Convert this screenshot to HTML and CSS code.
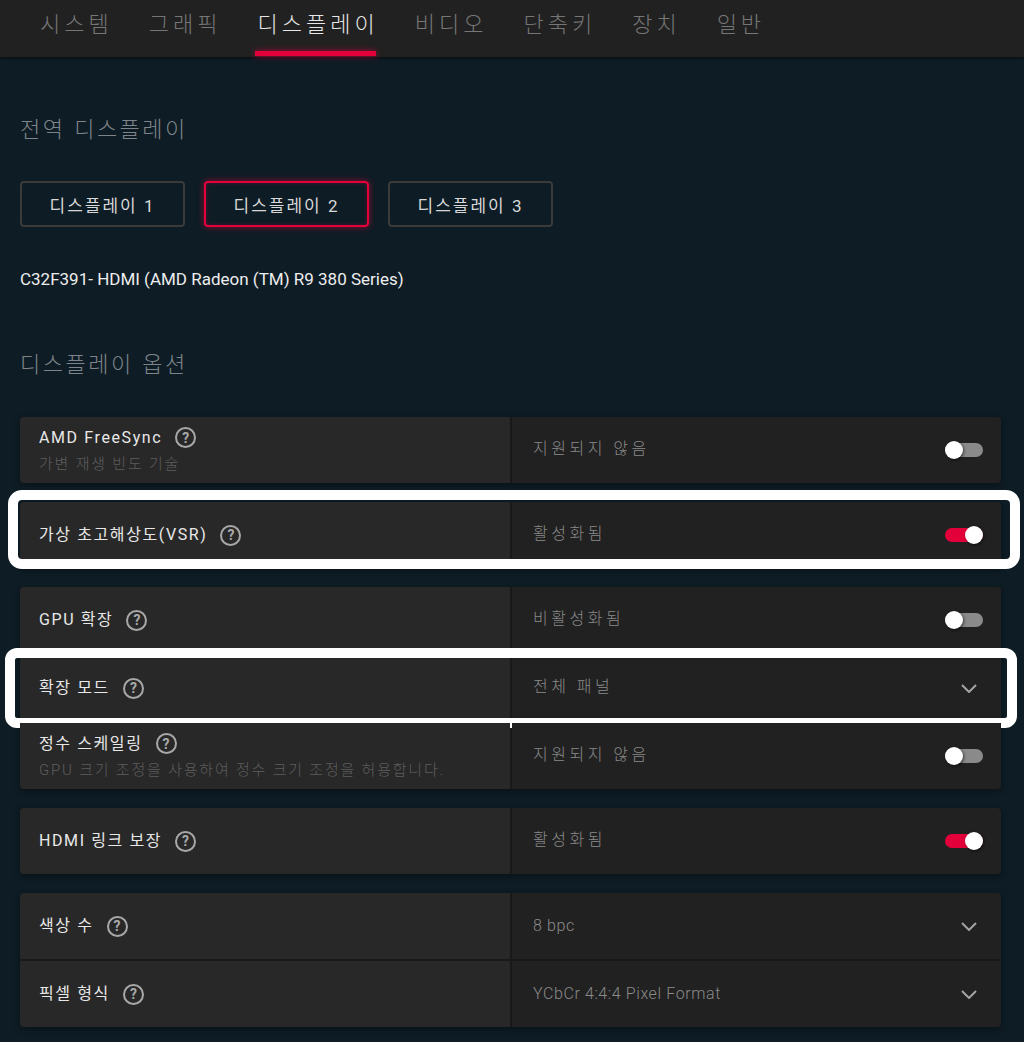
FILE: index.html
```html
<!DOCTYPE html>
<html lang="ko">
<head>
    <meta charset="UTF-8">
    <title>디스플레이</title>
    <link rel="stylesheet" href="styles.css">
</head>
<body>
    <nav class="topbar">
        <a class="tab">시스템</a>
        <a class="tab">그래픽</a>
        <a class="tab active">디스플레이</a>
        <a class="tab">비디오</a>
        <a class="tab">단축키</a>
        <a class="tab">장치</a>
        <a class="tab">일반</a>
    </nav>

    <main class="page">
        <h2 class="section-title">전역 디스플레이</h2>

        <div class="display-picker">
            <button class="display-btn">디스플레이 1</button>
            <button class="display-btn active">디스플레이 2</button>
            <button class="display-btn">디스플레이 3</button>
        </div>

        <p class="monitor-name">C32F391- HDMI (AMD Radeon (TM) R9 380 Series)</p>

        <h2 class="section-title spaced">디스플레이 옵션</h2>

        <div class="options">
            <div class="card">
                <div class="row">
                    <div class="setting">
                        <div class="label">AMD FreeSync <span class="help">?</span></div>
                        <div class="hint">가변 재생 빈도 기술</div>
                    </div>
                    <div class="control">
                        <span class="value">지원되지 않음</span>
                        <span class="toggle"><span class="knob"></span></span>
                    </div>
                </div>
            </div>

            <div class="card">
                <div class="row">
                    <div class="setting">
                        <div class="label">가상 초고해상도(VSR) <span class="help">?</span></div>
                    </div>
                    <div class="control">
                        <span class="value">활성화됨</span>
                        <span class="toggle on"><span class="knob"></span></span>
                    </div>
                </div>
                <span class="callout callout-vsr"></span>
            </div>

            <div class="card">
                <div class="row">
                    <div class="setting">
                        <div class="label">GPU 확장 <span class="help">?</span></div>
                    </div>
                    <div class="control">
                        <span class="value">비활성화됨</span>
                        <span class="toggle"><span class="knob"></span></span>
                    </div>
                </div>
                <div class="row">
                    <div class="setting">
                        <div class="label">확장 모드 <span class="help">?</span></div>
                    </div>
                    <div class="control">
                        <span class="value">전체 패널</span>
                        <svg class="chevron" width="16" height="9" viewBox="0 0 16 9"><polyline points="1,1 8,8 15,1" fill="none" stroke="#a3a3a3" stroke-width="2"/></svg>
                    </div>
                    <span class="callout callout-scale"></span>
                </div>
                <div class="row">
                    <div class="setting">
                        <div class="label">정수 스케일링 <span class="help">?</span></div>
                        <div class="hint">GPU 크기 조정을 사용하여 정수 크기 조정을 허용합니다.</div>
                    </div>
                    <div class="control">
                        <span class="value">지원되지 않음</span>
                        <span class="toggle"><span class="knob"></span></span>
                    </div>
                </div>
            </div>

            <div class="card">
                <div class="row">
                    <div class="setting">
                        <div class="label">HDMI 링크 보장 <span class="help">?</span></div>
                    </div>
                    <div class="control">
                        <span class="value">활성화됨</span>
                        <span class="toggle on"><span class="knob"></span></span>
                    </div>
                </div>
            </div>

            <div class="card">
                <div class="row">
                    <div class="setting">
                        <div class="label">색상 수 <span class="help">?</span></div>
                    </div>
                    <div class="control">
                        <span class="value latin">8 bpc</span>
                        <svg class="chevron" width="16" height="9" viewBox="0 0 16 9"><polyline points="1,1 8,8 15,1" fill="none" stroke="#a3a3a3" stroke-width="2"/></svg>
                    </div>
                </div>
                <div class="row">
                    <div class="setting">
                        <div class="label">픽셀 형식 <span class="help">?</span></div>
                    </div>
                    <div class="control">
                        <span class="value latin">YCbCr 4:4:4 Pixel Format</span>
                        <svg class="chevron" width="16" height="9" viewBox="0 0 16 9"><polyline points="1,1 8,8 15,1" fill="none" stroke="#a3a3a3" stroke-width="2"/></svg>
                    </div>
                </div>
            </div>
        </div>
    </main>
</body>
</html>
```

FILE: styles.css
```css
:root {
    --page-bg: #0e1c25;
    --bar-bg: #212121;
    --cell-left: #282828;
    --cell-right: #212121;
    --divider: #191919;
    --accent: #e3003a;
    --muted: #8a8a8a;
}

body {
    margin: 0;
    background-color: var(--page-bg);
    font-family: 'Roboto', 'Noto Sans CJK KR', sans-serif;
    color: #e8e8e8;
}

/* top tab bar */
.topbar {
    display: flex;
    gap: 34px;
    height: 57px;
    padding-left: 39px;
    background-color: var(--bar-bg);
    box-shadow: 0 1px 3px rgba(0, 0, 0, 0.6);
}

.tab {
    display: flex;
    flex-direction: column;
    padding: 0 1px;
    font-family: 'Noto Sans CJK KR', sans-serif;
    font-size: 22px;
    font-weight: 300;
    line-height: 44px;
    letter-spacing: 4px;
    color: #767676;
    cursor: pointer;
}

.tab.active {
    color: #e6e6e6;
}

.tab.active::after {
    content: "";
    height: 5px;
    margin-top: 7px;
    margin-right: 3px;
    margin-left: -2px;
    background-color: var(--accent);
    box-shadow: 0 0 6px rgba(227, 0, 58, 0.7);
}

/* page */
.page {
    padding: 55px 23px 15px 20px;
}

.section-title {
    margin: 0;
    font-family: 'Noto Sans CJK KR', sans-serif;
    font-size: 22px;
    font-weight: 300;
    line-height: 30px;
    letter-spacing: 2.5px;
    color: #7e8489;
}

.section-title.spaced {
    margin-top: 56px;
}

.display-picker {
    display: flex;
    gap: 19px;
    margin-top: 39px;
}

.display-btn {
    width: 165px;
    height: 46px;
    border: 2px solid #3b3b3b;
    border-radius: 4px;
    background: transparent;
    color: #d8d8d8;
    font-family: 'Roboto', 'Noto Sans CJK KR', sans-serif;
    font-size: 17px;
    letter-spacing: 2px;
    cursor: pointer;
}

.display-btn.active {
    border-color: var(--accent);
    box-shadow: 0 0 6px rgba(227, 0, 58, 0.6), inset 0 0 4px rgba(227, 0, 58, 0.3);
}

.monitor-name {
    margin: 40px 0 0;
    font-size: 17px;
    line-height: 24px;
    color: #ededed;
}

/* option cards */
.options {
    display: flex;
    flex-direction: column;
    gap: 19px;
    margin-top: 40px;
}

.card {
    position: relative;
    display: flex;
    flex-direction: column;
    gap: 2px;
    background-color: var(--divider);
    border-radius: 4px;
    box-shadow: 0 2px 6px rgba(0, 0, 0, 0.4);
}

.row {
    position: relative;
    display: grid;
    grid-template-columns: 490px 1fr;
    column-gap: 2px;
    height: 66px;
}

.setting {
    display: flex;
    flex-direction: column;
    justify-content: center;
    padding: 0 19px;
    background-color: var(--cell-left);
}

.control {
    display: flex;
    align-items: center;
    justify-content: space-between;
    padding: 0 18px 0 21px;
    background-color: var(--cell-right);
}

.row:first-child .setting { border-top-left-radius: 4px; }
.row:first-child .control { border-top-right-radius: 4px; }
.row:last-child .setting { border-bottom-left-radius: 4px; }
.row:last-child .control { border-bottom-right-radius: 4px; }

.label {
    display: flex;
    align-items: center;
    gap: 13px;
    font-size: 16px;
    line-height: 22px;
    letter-spacing: 1.6px;
    color: #e8e8e8;
}

.hint {
    margin-top: 5px;
    font-size: 15px;
    font-weight: 300;
    line-height: 20px;
    letter-spacing: 1.8px;
    color: #5d5d5d;
}

.help {
    display: flex;
    align-items: center;
    justify-content: center;
    width: 17px;
    height: 17px;
    border: 2px solid #a8a8a8;
    border-radius: 50%;
    font-family: 'Roboto', sans-serif;
    font-size: 14px;
    font-weight: 700;
    letter-spacing: 0;
    line-height: 1;
    color: #a8a8a8;
}

.value {
    margin-bottom: 6px;
    font-size: 16px;
    font-weight: 300;
    letter-spacing: 3.5px;
    color: var(--muted);
}

.value.latin {
    margin-bottom: 2px;
    letter-spacing: 0.6px;
}

.chevron {
    margin-right: 6px;
}

.toggle {
    display: flex;
    align-items: center;
    justify-content: flex-start;
    width: 38px;
    height: 14px;
    border-radius: 7px;
    background-color: #8a8a8a;
}

.toggle.on {
    justify-content: flex-end;
    background-color: var(--accent);
}

.knob {
    flex: none;
    width: 18px;
    height: 18px;
    border-radius: 50%;
    background-color: #fff;
    box-shadow: 1px 1px 3px rgba(0, 0, 0, 0.6);
}

/* white annotation frames drawn over the screenshot */
.callout {
    position: absolute;
    border: 10px solid #fff;
    border-radius: 14px;
    pointer-events: none;
}

.callout-vsr {
    top: -12px;
    left: -12px;
    right: -19px;
    bottom: -1px;
}

.callout-scale {
    top: -7px;
    left: -15px;
    right: -16px;
    bottom: -7px;
    border-radius: 12px;
}
```
